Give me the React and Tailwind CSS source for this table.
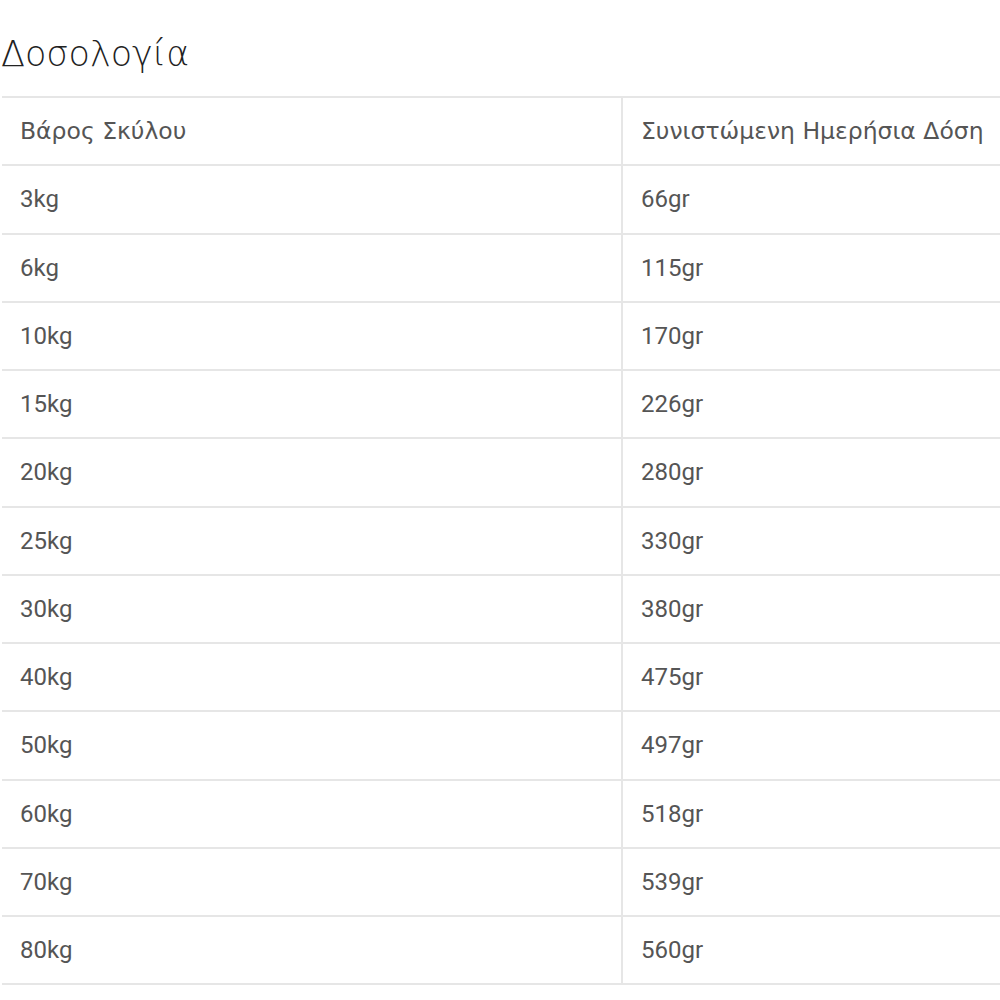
import React from "react";

const rows = [
  ["3kg", "66gr"],
  ["6kg", "115gr"],
  ["10kg", "170gr"],
  ["15kg", "226gr"],
  ["20kg", "280gr"],
  ["25kg", "330gr"],
  ["30kg", "380gr"],
  ["40kg", "475gr"],
  ["50kg", "497gr"],
  ["60kg", "518gr"],
  ["70kg", "539gr"],
  ["80kg", "560gr"],
];

const greek = { fontFamily: "'DejaVu Sans', 'Noto Sans', sans-serif" };
const latin = { fontFamily: "Roboto, 'Noto Sans', sans-serif" };

export default function App() {
  return (
    <div className="w-[1000px] h-[1000px] bg-white overflow-hidden">
      <h2 style={greek} className="pl-[1px] pt-[32px] h-[96px] text-[35px] leading-[44px] text-[#222] font-extralight">Δοσολογία</h2>
      <div className="pl-[2px]">
        <table className="w-[1040px] border-collapse table-fixed">
          <colgroup>
            <col className="w-[620px]" />
            <col />
          </colgroup>
          <tbody>
            <tr className="h-[68.25px]">
              <td style={greek} className="border-y-2 border-[#e6e6e6] pl-[18px] text-[23.5px] text-[#555] align-middle">Βάρος Σκύλου</td>
              <td style={greek} className="border-2 border-[#e6e6e6] pl-[18px] text-[23.5px] text-[#555] align-middle whitespace-nowrap">Συνιστώμενη Ημερήσια Δόση</td>
            </tr>
            {rows.map(([a, b]) => (
              <tr key={a} className="h-[68.25px]">
                <td style={latin} className="border-y-2 border-[#e6e6e6] pl-[18px] text-[24px] text-[#555] align-middle">{a}</td>
                <td style={latin} className="border-2 border-[#e6e6e6] pl-[18px] text-[24px] text-[#555] align-middle">{b}</td>
              </tr>
            ))}
          </tbody>
        </table>
      </div>
    </div>
  );
}
